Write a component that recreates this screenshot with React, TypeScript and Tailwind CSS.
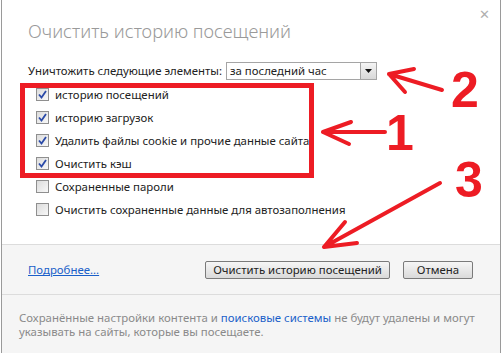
const items: [string, boolean][] = [
  ['историю посещений', true],
  ['историю загрузок', true],
  ['Удалить файлы cookie и прочие данные сайта', true],
  ['Очистить кэш', true],
  ['Сохраненные пароли', false],
  ['Очистить сохраненные данные для автозаполнения', false],
];

function Checkbox({ checked }: { checked: boolean }) {
  return (
    <span className="flex h-[13px] w-[13px] shrink-0 items-center justify-center border border-[#8f8f8f] bg-gradient-to-br from-[#dcdcdc] to-[#f8f8f8]">
      {checked && (
        <svg width="9" height="9" viewBox="0 0 9 9">
          <path d="M1 4.5 L3.5 7.5 L8 1" fill="none" stroke="#2a4aa8" strokeWidth="1.8" />
        </svg>
      )}
    </span>
  );
}

export default function App() {
  return (
    <div
      className="relative h-[353px] w-[502px] overflow-hidden bg-white pl-[1px] text-[11.4px] text-[#222]"
      style={{ fontFamily: '"Noto Sans", "Open Sans", sans-serif' }}
    >
      <div className="flex h-full w-[500px] flex-col border-x border-[#9a9a9a]">
        <div className="relative flex flex-col bg-white pb-[23px]">
          <span className="absolute right-[10px] top-[8px] text-[13px] leading-none text-[#b0b0b0]">✕</span>
          <h1 className="pl-[26px] pt-[19px] text-[18.3px] font-light leading-[24px] text-[#9a9a9a]">
            Очистить историю посещений
          </h1>
          <div className="mt-[19px] flex h-[18px] items-center pl-[26px]">
            <span>Уничтожить следующие элементы:</span>
            <div className="ml-[4px] flex h-[18px] w-[151px] items-center justify-between border border-[#a5a5a5] bg-white pl-[3px]">
              <span>за последний час</span>
              <span className="flex h-[16px] w-[16px] items-center justify-center border-l border-[#a5a5a5] bg-gradient-to-b from-[#f4f4f4] to-[#d8d8d8]">
                <svg width="7" height="4" viewBox="0 0 7 4">
                  <path d="M0 0 H7 L3.5 4 Z" fill="#111" />
                </svg>
              </span>
            </div>
          </div>
          <div className="mt-[3px] flex flex-col pl-[34px]">
            {items.map(([label, checked]) => (
              <label key={label} className="flex h-[23px] items-center gap-[6px]">
                <Checkbox checked={checked} />
                <span>{label}</span>
              </label>
            ))}
          </div>
        </div>
        <div className="flex flex-1 flex-col border-t border-[#dcdcdc] bg-[#f5f5f5]">
          <div className="flex items-center justify-between pb-[15px] pl-[26px] pr-[27px] pt-[16px]">
            <a className="text-[#1a5fc9] underline">Подробнее...</a>
            <div className="flex gap-[13px]">
              <button className="h-[18px] w-[185px] rounded-[2px] border border-[#7a7a7a] bg-gradient-to-b from-[#f6f6f6] to-[#dadada] leading-none">
                Очистить историю посещений
              </button>
              <button className="h-[18px] w-[70px] rounded-[2px] border border-[#7a7a7a] bg-gradient-to-b from-[#f6f6f6] to-[#dadada] leading-none">
                Отмена
              </button>
            </div>
          </div>
          <p className="border-t border-[#dcdcdc] pl-[17px] pr-[20px] pt-[16px] leading-[14px] text-[#8a8a8a]">
            Сохранённые настройки контента и <span className="text-[#1a5fc9]">поисковые системы</span> не будут удалены и могут указывать на сайты, которые вы посещаете.
          </p>
        </div>
      </div>

      {/* red annotations */}
      <div className="pointer-events-none absolute left-[20px] top-[83px] h-[95px] w-[294px] border-[5px] border-[#ed1c24]" />
      <svg className="pointer-events-none absolute left-0 top-0" width="502" height="353" viewBox="0 0 502 353">
        <g fill="none" stroke="#ed1c24" strokeWidth="4" strokeLinecap="round" strokeLinejoin="round">
          <path d="M442 90 L389 74 M389 74 L414 69 M389 74 L405 92" />
          <path d="M385 132 L323 132 M323 132 L351 122 M323 132 L349 144" />
          <path d="M440 183 L324 247 M324 247 L345 222 M324 247 L357 243" />
        </g>
      </svg>
      <span
        className="absolute left-[451px] top-[65px] text-[50px] font-bold leading-none text-[#ed1c24]"
        style={{ fontFamily: '"Liberation Sans", Arial, sans-serif' }}
      >
        2
      </span>
      <span
        className="absolute left-[386px] top-[108px] text-[50px] font-bold leading-none text-[#ed1c24]"
        style={{ fontFamily: '"Liberation Sans", Arial, sans-serif' }}
      >
        1
      </span>
      <span
        className="absolute left-[455px] top-[155px] text-[50px] font-bold leading-none text-[#ed1c24]"
        style={{ fontFamily: '"Liberation Sans", Arial, sans-serif' }}
      >
        3
      </span>
    </div>
  );
}
